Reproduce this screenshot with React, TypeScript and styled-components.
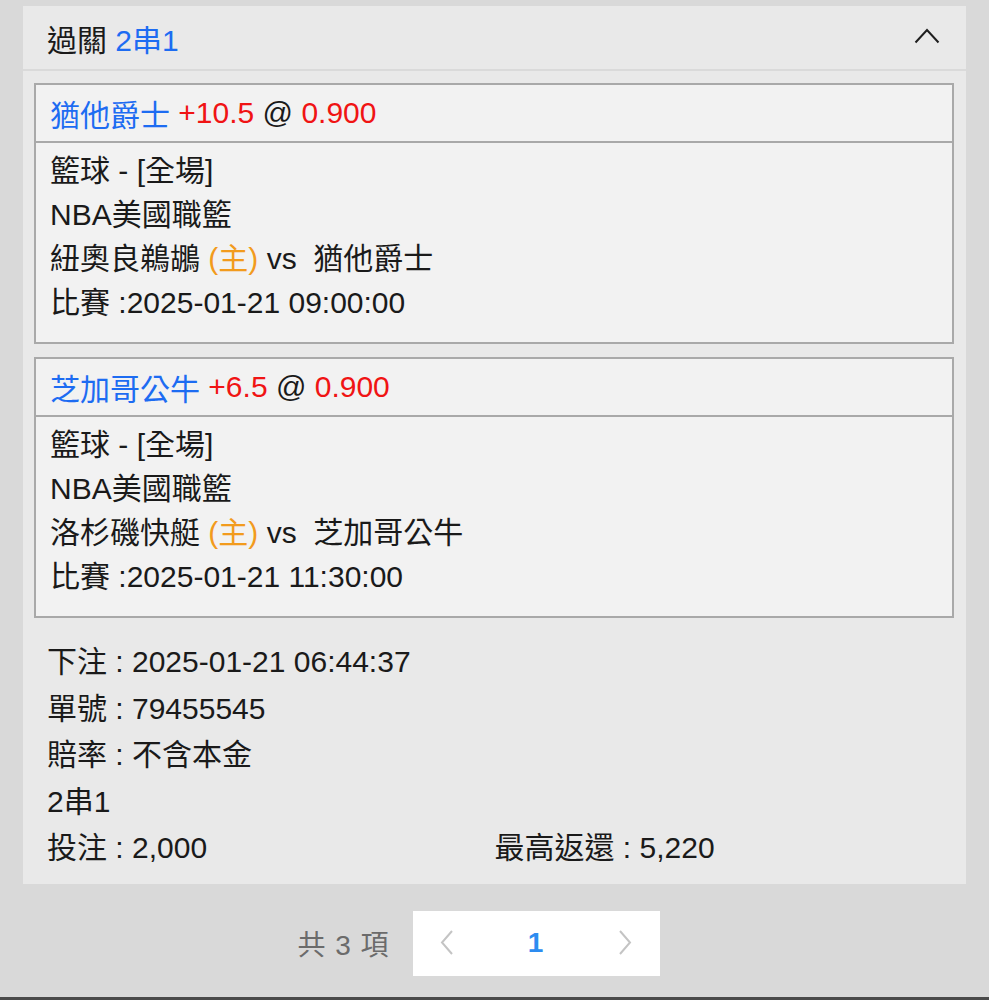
import styled, { createGlobalStyle } from "styled-components";

const GlobalStyle = createGlobalStyle`
	html, body {
		margin: 0;
		padding: 0;
		background: #d9d9d9;
	}
	body {
		font-family: "Liberation Sans", "Noto Sans CJK TC", sans-serif;
		color: #1a1a1a;
	}
`;

const Page = styled.div`
	box-sizing: border-box;
	height: 1000px;
	padding-top: 6px;
	background: #d9d9d9;
	border-bottom: 3px solid #4a4a4a;
`;

const Panel = styled.section`
	margin: 0 23px;
	background: #e9e9e9;
`;

const Header = styled.div`
	display: flex;
	align-items: center;
	justify-content: space-between;
	height: 63px;
	padding: 0 26px 0 24px;
	font-size: 30px;
	border-bottom: 2px solid #dadada;
`;

const Blue = styled.span`
	color: #1d6cf2;
`;

const Red = styled.span`
	color: #f01414;
`;

const Orange = styled.span`
	color: #f29b1d;
`;

const Chevron = styled.svg`
	width: 26px;
	height: 16px;
	margin-bottom: 4px;
`;

const Body = styled.div`
	padding: 12px 12px 0 11px;
	display: flex;
	flex-direction: column;
	gap: 13px;
`;

const Card = styled.div`
	background: #f2f2f2;
	border: 2px solid #a9a9a9;
`;

const CardTitle = styled.div`
	height: 56px;
	display: flex;
	align-items: center;
	padding-left: 14px;
	font-size: 30px;
	border-bottom: 2px solid #a9a9a9;
`;

const CardBody = styled.div`
	padding: 6px 0 17px 14px;
	font-size: 30px;
	line-height: 44px;
`;

const Summary = styled.div`
	display: grid;
	grid-template-columns: 1fr 1fr;
	padding: 21px 24px 12px;
	font-size: 30px;
	line-height: 46.5px;
`;

const Full = styled.div`
	grid-column: 1 / -1;
`;

const Pager = styled.div`
	display: flex;
	align-items: center;
	justify-content: center;
	gap: 23px;
	padding: 27px 32px 0 0;
`;

const Total = styled.span`
	font-size: 28px;
	color: #6b6b6b;
	letter-spacing: 1px;
`;

const PageBox = styled.div`
	box-sizing: border-box;
	display: grid;
	grid-template-columns: auto 1fr auto;
	align-items: center;
	width: 247px;
	height: 65px;
	padding: 0 28px 0 27px;
	background: #ffffff;
`;

const PageCell = styled.div<{ $active?: boolean }>`
	display: flex;
	align-items: center;
	justify-content: center;
	font-size: 28px;
	font-weight: bold;
	color: ${(p) => (p.$active ? "#2d8cf0" : "#bdbdbd")};
`;

type Leg = {
	team: string;
	line: string;
	odds: string;
	home: string;
	away: string;
	time: string;
};

const legs: Leg[] = [
	{
		team: "猶他爵士",
		line: "+10.5",
		odds: "0.900",
		home: "紐奧良鵜鶘",
		away: "猶他爵士",
		time: "2025-01-21 09:00:00",
	},
	{
		team: "芝加哥公牛",
		line: "+6.5",
		odds: "0.900",
		home: "洛杉磯快艇",
		away: "芝加哥公牛",
		time: "2025-01-21 11:30:00",
	},
];

const Arrow = ({ dir }: { dir: "left" | "right" | "up" }) => {
	if (dir === "up") {
		return (
			<Chevron viewBox="0 0 26 16">
				<polyline points="1.5,14.5 13,2 24.5,14.5" fill="none" stroke="#1f1f1f" strokeWidth="2" />
			</Chevron>
		);
	}
	const pts = dir === "left" ? "12,1 2,12.5 12,24" : "2,1 12,12.5 2,24";
	return (
		<svg width="14" height="26" viewBox="0 0 14 26">
			<polyline points={pts} fill="none" stroke="#c4c4c4" strokeWidth="2" />
		</svg>
	);
};

const App = () => {
	return (
		<Page>
			<GlobalStyle />
			<Panel>
				<Header>
					<span>
						過關 <Blue>2串1</Blue>
					</span>
					<Arrow dir="up" />
				</Header>
				<Body>
					{legs.map((leg) => (
						<Card key={leg.team}>
							<CardTitle>
								<Blue>{leg.team}</Blue>&nbsp;<Red>{leg.line}</Red>&nbsp;@&nbsp;<Red>{leg.odds}</Red>
							</CardTitle>
							<CardBody>
								<div>籃球 - [全場]</div>
								<div>NBA美國職籃</div>
								<div>
									{leg.home} <Orange>(主)</Orange> vs&nbsp; {leg.away}
								</div>
								<div>比賽 :{leg.time}</div>
							</CardBody>
						</Card>
					))}
				</Body>
				<Summary>
					<Full>下注 : 2025-01-21 06:44:37</Full>
					<Full>單號 : 79455545</Full>
					<Full>賠率 : 不含本金</Full>
					<Full>2串1</Full>
					<div>投注 : 2,000</div>
					<div>最高返還 : 5,220</div>
				</Summary>
			</Panel>
			<Pager>
				<Total>共 3 項</Total>
				<PageBox>
					<PageCell>
						<Arrow dir="left" />
					</PageCell>
					<PageCell $active>1</PageCell>
					<PageCell>
						<Arrow dir="right" />
					</PageCell>
				</PageBox>
			</Pager>
		</Page>
	);
};

export default App;
